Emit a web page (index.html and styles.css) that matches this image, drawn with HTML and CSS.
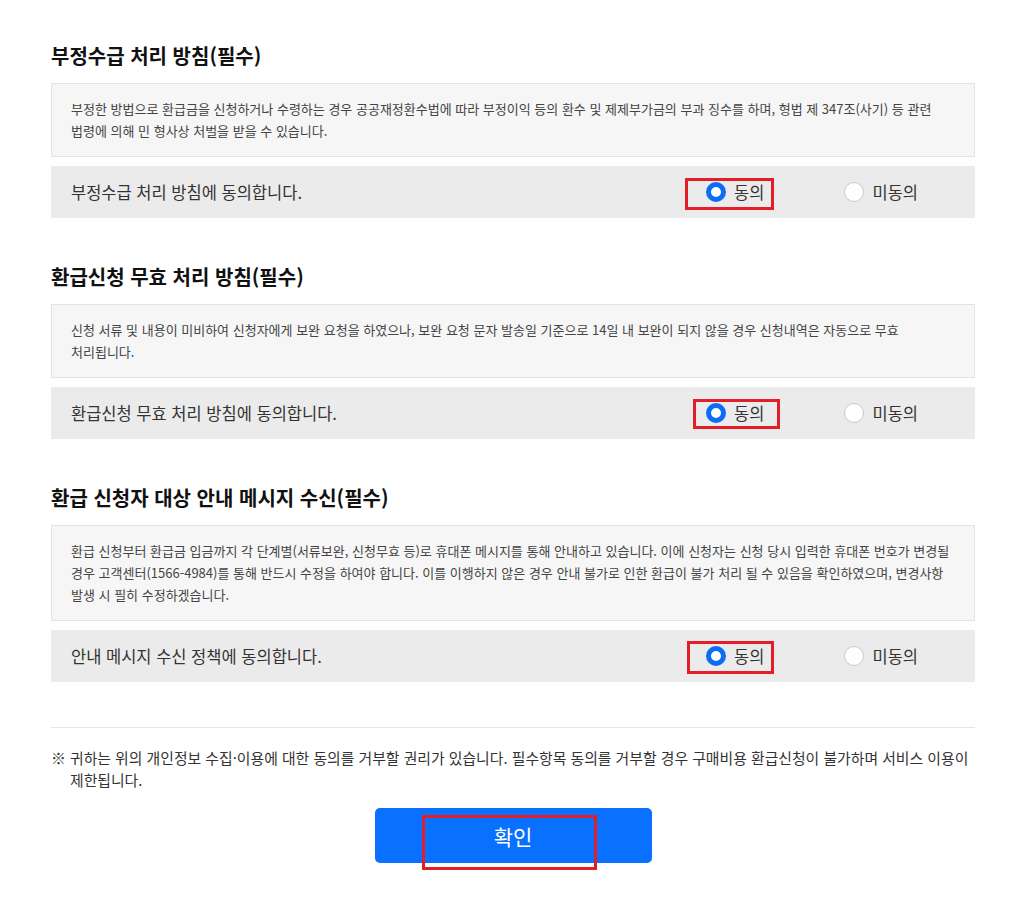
FILE: index.html
```html
<!DOCTYPE html>
<html lang="ko">
<head>
<meta charset="utf-8">
<title>약관 동의</title>
<link rel="stylesheet" href="styles.css">
</head>
<body>
<div class="page">
  <section class="sec">
    <h2 class="sec-title">부정수급 처리 방침(필수)</h2>
    <div class="terms">부정한 방법으로 환급금을 신청하거나 수령하는 경우 공공재정환수법에 따라 부정이익 등의 환수 및 제제부가금의 부과 징수를 하며, 형법 제 347조(사기) 등 관련 법령에 의해 민 형사상 처벌을 받을 수 있습니다.</div>
    <div class="agree-row">
      <span class="agree-text">부정수급 처리 방침에 동의합니다.</span>
      <div class="options">
        <label class="opt opt-yes"><span class="radio on"></span><span class="opt-label">동의</span><span class="mark mark-1"></span></label>
        <label class="opt opt-no"><span class="radio"></span><span class="opt-label">미동의</span></label>
      </div>
    </div>
  </section>

  <section class="sec">
    <h2 class="sec-title">환급신청 무효 처리 방침(필수)</h2>
    <div class="terms">신청 서류 및 내용이 미비하여 신청자에게 보완 요청을 하였으나, 보완 요청 문자 발송일 기준으로 14일 내 보완이 되지 않을 경우 신청내역은 자동으로 무효<br>처리됩니다.</div>
    <div class="agree-row">
      <span class="agree-text">환급신청 무효 처리 방침에 동의합니다.</span>
      <div class="options">
        <label class="opt opt-yes"><span class="radio on"></span><span class="opt-label">동의</span><span class="mark mark-2"></span></label>
        <label class="opt opt-no"><span class="radio"></span><span class="opt-label">미동의</span></label>
      </div>
    </div>
  </section>

  <section class="sec">
    <h2 class="sec-title">환급 신청자 대상 안내 메시지 수신(필수)</h2>
    <div class="terms">환급 신청부터 환급금 입금까지 각 단계별(서류보완, 신청무효 등)로 휴대폰 메시지를 통해 안내하고 있습니다. 이에 신청자는 신청 당시 입력한 휴대폰 번호가 변경될<br>경우 고객센터(1566-4984)를 통해 반드시 수정을 하여야 합니다. 이를 이행하지 않은 경우 안내 불가로 인한 환급이 불가 처리 될 수 있음을 확인하였으며, 변경사항<br>발생 시 필히 수정하겠습니다.</div>
    <div class="agree-row">
      <span class="agree-text">안내 메시지 수신 정책에 동의합니다.</span>
      <div class="options">
        <label class="opt opt-yes"><span class="radio on"></span><span class="opt-label">동의</span><span class="mark mark-3"></span></label>
        <label class="opt opt-no"><span class="radio"></span><span class="opt-label">미동의</span></label>
      </div>
    </div>
  </section>

  <hr class="divider">

  <p class="note"><span class="note-mark">※</span>귀하는 위의 개인정보 수집·이용에 대한 동의를 거부할 권리가 있습니다. 필수항목 동의를 거부할 경우 구매비용 환급신청이 불가하며 서비스 이용이 제한됩니다.</p>

  <div class="actions">
    <button class="btn-confirm" type="button">확인<span class="mark mark-btn"></span></button>
  </div>
</div>
</body>
</html>
```

FILE: styles.css
```css
html, body {
  margin: 0;
  padding: 0;
  background: #ffffff;
}

body {
  font-family: "Noto Sans CJK KR", "Noto Sans", sans-serif;
  color: #333333;
}

.page {
  width: 924px;
  margin: 0 0 0 51px;
  padding-top: 42px;
}

.sec + .sec {
  margin-top: 45px;
}

.sec-title {
  margin: 0 0 13px 0;
  font-size: 20px;
  line-height: 28px;
  font-weight: 700;
  color: #111111;
}

.terms {
  border: 1px solid #e3e3e3;
  background: #f6f6f6;
  padding: 14px 19px;
  font-size: 13px;
  line-height: 22px;
  color: #444444;
  word-break: keep-all;
}

.agree-row {
  margin-top: 9px;
  height: 52px;
  background: #ebebeb;
  display: flex;
  align-items: center;
  padding-left: 20px;
  padding-right: 57px;
}

.agree-text {
  font-size: 16.5px;
  color: #333333;
}

.options {
  margin-left: auto;
  display: flex;
  align-items: center;
  gap: 80px;
}

.opt {
  position: relative;
  display: flex;
  align-items: center;
  gap: 8px;
  height: 20px;
  font-size: 16.5px;
  color: #333333;
}

.radio {
  box-sizing: border-box;
  width: 20px;
  height: 20px;
  border-radius: 50%;
  background: #ffffff;
  border: 1px solid #c8c8c8;
}

.radio.on {
  border: 5px solid #0b6cf5;
}

.opt-label {
  line-height: 20px;
}

.mark {
  position: absolute;
  box-sizing: border-box;
  border: 3px solid #e21f26;
  pointer-events: none;
}

.mark-1 { left: -21px; top: -4px; width: 89px; height: 32px; }
.mark-2 { left: -13px; top: -4px; width: 87px; height: 30px; }
.mark-3 { left: -19px; top: -5px; width: 87px; height: 33px; }

.divider {
  margin: 45px 0 0 0;
  border: 0;
  border-top: 1px solid #e6e6e6;
  height: 0;
}

.note {
  margin: 19px 0 0 0;
  padding-left: 19px;
  text-indent: -19px;
  font-size: 14.85px;
  line-height: 22px;
  color: #333333;
  word-break: keep-all;
}

.note-mark {
  display: inline-block;
  width: 19px;
  text-indent: 0;
}

.actions {
  display: flex;
  justify-content: center;
  margin-top: 17px;
  padding-bottom: 40px;
}

.btn-confirm {
  position: relative;
  width: 277px;
  height: 55px;
  border: 0;
  border-radius: 5px;
  background: #0a70ff;
  color: #ffffff;
  font-family: "Noto Sans CJK KR", "Noto Sans", sans-serif;
  font-size: 21px;
  padding: 0;
}

.mark-btn {
  left: 47px;
  top: 7px;
  width: 175px;
  height: 55px;
}
```
